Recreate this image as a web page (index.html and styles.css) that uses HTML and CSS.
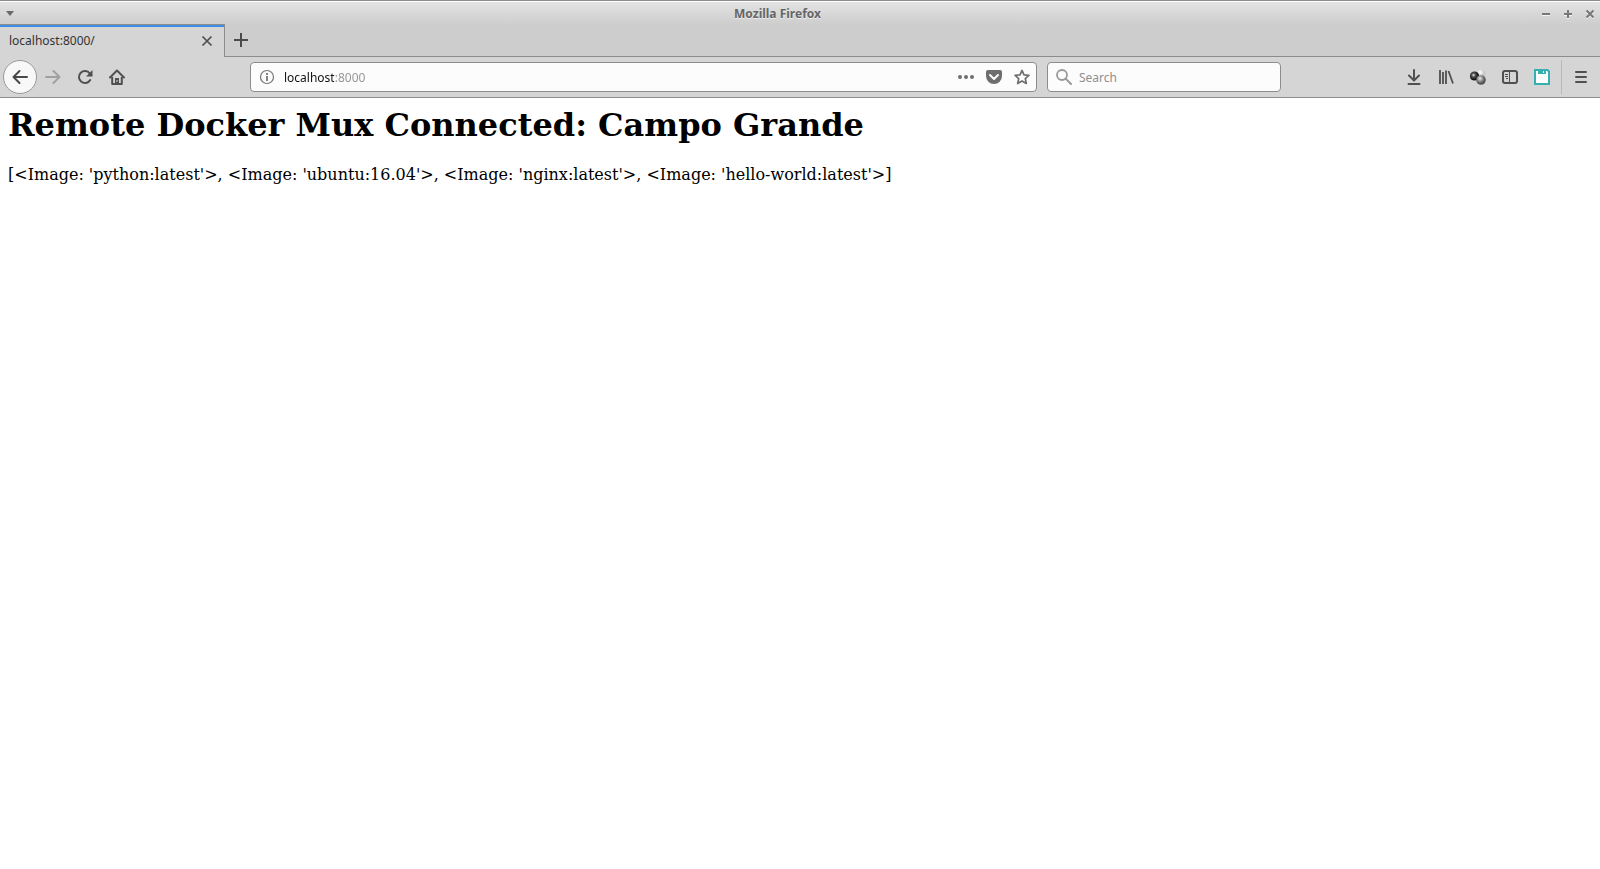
FILE: index.html
```html
<!DOCTYPE html>
<html lang="en">
<head>
<meta charset="utf-8">
<title>Mozilla Firefox</title>
<link rel="stylesheet" href="styles.css">
</head>
<body>
<header class="titlebar">
  <button class="win-menu" aria-label="Window menu"><svg width="8" height="5" viewBox="0 0 8 5"><path d="M0 0h8L4 5z" fill="#6a6a6a"/></svg></button>
  <div class="window-title">Mozilla Firefox</div>
  <div class="win-controls">
    <button class="win-button" aria-label="Minimize"><svg width="10" height="10" viewBox="0 0 10 10"><path d="M1 6.500h8" stroke="#f4f4f4"/><path d="M1 5h8" stroke="#777" stroke-width="2"/></svg></button>
    <button class="win-button" aria-label="Maximize"><svg width="10" height="10" viewBox="0 0 10 10"><path d="M1 6.500h8M4 9.500h2" stroke="#f4f4f4"/><path d="M1 5h8M5 1v8" stroke="#777" stroke-width="2"/></svg></button>
    <button class="win-button" aria-label="Close"><svg width="10" height="10" viewBox="0 0 10 10"><path d="M1.500 2.500l7 7M8.500 2.500l-7 7" stroke="#f4f4f4" stroke-width="2"/><path d="M1.500 1.500l7 7M8.500 1.500l-7 7" stroke="#777" stroke-width="2"/></svg></button>
  </div>
</header>

<div class="tabstrip">
  <div class="tab">
    <span class="tab-label">localhost:8000/</span>
    <button class="icon-button" aria-label="Close tab"><svg width="16" height="16" viewBox="0 0 16 16"><path d="M3.500 3.500l9 9M12.500 3.500l-9 9" stroke="#4f4f4f" stroke-width="1.700" fill="none"/></svg></button>
  </div>
  <button class="new-tab" aria-label="New tab"><svg width="16" height="16" viewBox="0 0 16 16"><path d="M8 1v14M1 8h14" stroke="#4a4a4a" stroke-width="2"/></svg></button>
</div>

<nav class="toolbar">
  <button class="back" aria-label="Back"><svg width="16" height="16" viewBox="0 0 16 16"><path d="M15 8H1.500M7.500 2L1.500 8l6 6" stroke="#484848" stroke-width="2" stroke-linecap="round" stroke-linejoin="round" fill="none"/></svg></button>
  <button class="tool" aria-label="Forward" disabled><svg width="16" height="16" viewBox="0 0 16 16"><path d="M1 8h13.500M8.500 2l6 6-6 6" stroke="#a0a0a0" stroke-width="2" stroke-linecap="round" stroke-linejoin="round" fill="none"/></svg></button>
  <button class="tool" aria-label="Reload"><svg width="16" height="16" viewBox="0 0 16 16"><path d="M12.800 4.500A6 6 0 1 0 13.200 11" stroke="#505050" stroke-width="2" stroke-linecap="round" fill="none"/><path d="M15.500 1v6.500H9z" fill="#505050"/></svg></button>
  <button class="tool" aria-label="Home"><svg width="16" height="16" viewBox="0 0 16 16"><path d="M1 8.500L8 1.500l7 7" stroke="#505050" stroke-width="2" stroke-linecap="round" stroke-linejoin="round" fill="none"/><path d="M3.200 8v7h9.600V8" stroke="#505050" stroke-width="2" stroke-linejoin="round" fill="none"/><path d="M6 9h4v6H6z" fill="#505050"/><path d="M8 11v2" stroke="#d5d5d5"/></svg></button>
  <div class="spacer"></div>

  <div class="field urlbar">
    <svg width="16" height="16" viewBox="0 0 16 16"><circle cx="8" cy="8" r="6.500" fill="none" stroke="#777" stroke-width="1.200"/><path d="M8 7v5M8 4v2" stroke="#777" stroke-width="1.800"/></svg>
    <input class="field-input url-input" type="text" value="localhost:8000" aria-label="Address">
    <div class="page-actions">
      <button class="icon-button" aria-label="Page actions"><svg width="16" height="16" viewBox="0 0 16 16" fill="#6e6e6e"><circle cx="2" cy="8" r="2"/><circle cx="8" cy="8" r="2"/><circle cx="14" cy="8" r="2"/></svg></button>
      <button class="icon-button" aria-label="Save to Pocket"><svg width="16" height="16" viewBox="0 0 16 16"><path d="M2 1h12a2 2 0 0 1 2 2v4a8 8 0 0 1-16 0V3a2 2 0 0 1 2-2z" fill="#6e6e6e"/><path d="M4 6l4 4 4-4" stroke="#fcfcfc" stroke-width="2" stroke-linecap="round" stroke-linejoin="round" fill="none"/></svg></button>
      <button class="icon-button" aria-label="Bookmark this page"><svg width="16" height="16" viewBox="0 0 16 16"><path d="M8 1.400l2 4.400 4.900.5-3.600 3.300 1 4.900L8 12l-4.300 2.500 1-4.900L1.100 6.300 6 5.800z" stroke="#6e6e6e" stroke-width="1.700" stroke-linejoin="round" fill="none"/></svg></button>
    </div>
  </div>
  <div class="field searchbar">
    <svg width="16" height="16" viewBox="0 0 16 16"><circle cx="6" cy="6" r="5" fill="none" stroke="#999" stroke-width="1.800"/><path d="M9.600 9.600l5.400 5.400" stroke="#999" stroke-width="2" stroke-linecap="round"/></svg>
    <input class="field-input" type="text" placeholder="Search" aria-label="Search">
  </div>

  <div class="spacer"></div>
  <button class="tool" aria-label="Downloads"><svg width="16" height="16" viewBox="0 0 16 16"><path d="M8 1v10M3 6.500l5 5 5-5M2.500 15h11" stroke="#505050" stroke-width="2" stroke-linecap="round" stroke-linejoin="round" fill="none"/></svg></button>
  <button class="tool" aria-label="Library"><svg width="16" height="16" viewBox="0 0 16 16"><path d="M2 1v14M5 3v12M8 1.500V15M10.500 2L15 14.500" stroke="#505050" stroke-width="1.800" fill="none"/></svg></button>
  <button class="tool" aria-label="Extension"><svg width="16" height="16" viewBox="0 0 16 16"><defs><radialGradient id="white-ball" cx=".4" cy=".35"><stop offset="0" stop-color="#fff"/><stop offset="1" stop-color="#c4c4c4"/></radialGradient><radialGradient id="black-ball" cx=".4" cy=".4"><stop offset="0" stop-color="#eee"/><stop offset=".4" stop-color="#555"/><stop offset="1" stop-color="#111"/></radialGradient><radialGradient id="gray-ball" cx=".4" cy=".35"><stop offset="0" stop-color="#eee"/><stop offset=".5" stop-color="#999"/><stop offset="1" stop-color="#555"/></radialGradient></defs><circle cx="11" cy="4.500" r="4.200" fill="url(#white-ball)"/><circle cx="4.500" cy="7" r="4.600" fill="url(#black-ball)"/><circle cx="11" cy="11" r="4.800" fill="url(#gray-ball)"/></svg></button>
  <button class="tool" aria-label="Sidebars"><svg width="16" height="16" viewBox="0 0 16 16"><rect x="1" y="2" width="14" height="12" rx="2" fill="none" stroke="#505050" stroke-width="2"/><path d="M7.500 2v12M3 5.500h3M3 7.500h3M4 9.500h2" stroke="#505050" fill="none"/></svg></button>
  <button class="tool" aria-label="Save page"><svg width="16" height="16" viewBox="0 0 16 16"><path d="M0 0h14l2 2v14H0z" fill="#35b0b0"/><path d="M2 2h2v3h8V2h1l1 1v11H2z" fill="#fff"/><path d="M9.500 2v2" stroke="#fff"/></svg></button>
  <div class="separator"></div>
  <button class="tool" aria-label="Open menu"><svg width="16" height="16" viewBox="0 0 16 16"><path d="M3 3h10M3 8h10M3 13h10" stroke="#505050" stroke-width="2" stroke-linecap="round"/></svg></button>
</nav>

<main class="page">
  <h1 class="page-heading">Remote Docker Mux Connected: Campo Grande</h1>
  <p class="images">[&lt;Image: 'python:latest'&gt;, &lt;Image: 'ubuntu:16.04'&gt;, &lt;Image: 'nginx:latest'&gt;, &lt;Image: 'hello-world:latest'&gt;]</p>
</main>
</body>
</html>
```
FILE: styles.css
```css
* {
  box-sizing: border-box;
}

body {
  margin: 0;
  background: #fff;
  font-family: "Noto Sans", sans-serif;
  font-size: 12px;
  color: #333;
}

button {
  display: flex;
  align-items: center;
  justify-content: center;
  padding: 0;
  border: 0;
  background: none;
}

svg {
  display: block;
  flex: none;
}

.titlebar {
  display: flex;
  align-items: center;
  height: 24px;
  padding-top: 2px;
  border-top: 1px solid #8c8c8c;
  box-shadow: inset 0 1px #fff;
  background: linear-gradient(#e4e4e4, #cecece);
}

.win-menu {
  width: 20px;
  height: 20px;
}

.window-title {
  flex: 1;
  text-align: center;
  font-weight: 700;
  line-height: 20px;
  color: #666;
  text-shadow: 0 1px #eee;
}

.win-controls {
  display: flex;
  margin-right: -1px;
}

.win-button {
  width: 22px;
  height: 20px;
}

.tabstrip {
  display: flex;
  height: 33px;
  background: #cdcdcd;
}

.tab {
  display: flex;
  align-items: center;
  justify-content: space-between;
  width: 225px;
  padding: 0 9px;
  border-top: 1px solid #8c8c8c;
  border-right: 1px solid #8c8c8c;
  box-shadow: inset 0 2px #3a8ee6;
  background: #d5d5d5;
}

.tab-label {
  line-height: 18px;
}

.new-tab {
  padding-left: 8px;
}

.new-tab,
.tabstrip::after {
  border-bottom: 1px solid #8c8c8c;
}

.tabstrip::after {
  content: "";
  flex: 1;
}

.toolbar {
  display: flex;
  align-items: center;
  height: 41px;
  padding: 0 3px;
  border-bottom: 1px solid #8c8c8c;
  background: #d5d5d5;
}

.back {
  width: 34px;
  height: 34px;
  border: 1px solid #999;
  border-radius: 50%;
  background: #f8f8f8;
}

.tool {
  width: 32px;
  height: 32px;
}

.spacer {
  flex: 0 1 117px;
}

.field {
  display: flex;
  align-items: center;
  height: 30px;
  border: 1px solid #8c8c8c;
  border-radius: 4px;
  background: #fcfcfc;
}

.urlbar {
  flex: 1 1 400px;
  gap: 9px;
  padding: 0 6px 0 8px;
}

.searchbar {
  width: 234px;
  margin-left: 10px;
  gap: 7px;
  padding: 0 8px;
}

.field-input {
  flex: 1;
  min-width: 0;
  height: 28px;
  padding: 0;
  border: 0;
  outline: 0;
  background: none;
  font: inherit;
  color: #222;
}

.field-input::placeholder {
  color: #8e8e8e;
  opacity: 1;
}

/* The host name is darker than the port */
.url-input {
  color: transparent;
  background: linear-gradient(to right, #111 50px, #929292 50px);
  -webkit-background-clip: text;
  background-clip: text;
}

.page-actions {
  display: flex;
  gap: 12px;
}

.separator {
  width: 1px;
  height: 34px;
  margin: 0 3px;
  background: #b9b9b9;
}

.page {
  padding: 8px;
  font-family: "DejaVu Serif", serif;
  font-size: 16px;
  color: #000;
}

.page-heading {
  margin: 0;
  font-size: 32px;
  line-height: 38px;
}

.images {
  margin: 21px 0 16px;
  line-height: 19px;
}
```
